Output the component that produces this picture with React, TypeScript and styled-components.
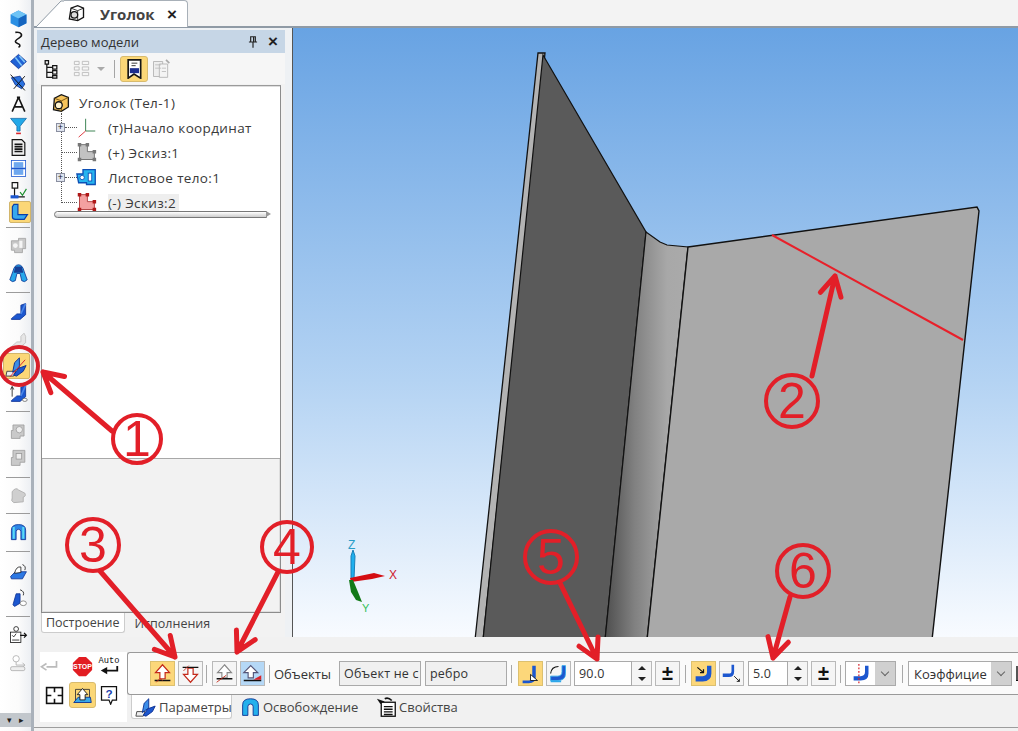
import React from "react";
import styled, { createGlobalStyle } from "styled-components";

const Global = createGlobalStyle`
  html, body { margin: 0; padding: 0; background: #f1f1f1; }
  body { font-family: "Open Sans", "Liberation Sans", sans-serif; color: #333; overflow: hidden; }
`;

const Root = styled.div`
  position: relative; width: 1018px; height: 731px; overflow: hidden;
  display: flex; background: #f1f1f1;
`;
const LeftBar = styled.div`
  width: 34px; flex: none; height: 731px; box-sizing: border-box; padding-top: 7.25px;
  display: flex; flex-direction: column; align-items: center; position: relative;
  background: linear-gradient(90deg, #fff 0%, #fbfbfb 60%, #eceff3 100%);
  border-right: 3px solid #a9b1ba;
`;
const Tool = styled.div<{ $h: number }>`
  height: ${p => p.$h}px; flex: none; width: 31px; display: flex; align-items: center; justify-content: center;
`;
const ToolFace = styled.div<{ $active?: boolean; $big?: boolean }>`
  width: ${p => (p.$big ? 27 : 22)}px; height: ${p => (p.$big ? 26 : 22)}px; flex: none; display: flex; align-items: center; justify-content: center;
  margin-left: ${p => (p.$big ? 2 : p.$active ? 8 : 5)}px; box-sizing: border-box;
  ${p => p.$active ? "background:#fbd777;border:1px solid #d2b56a;border-radius:2px;" : ""}
`;
const ToolSep = styled.div<{ $h: number }>`
  height: ${p => p.$h}px; flex: none; width: 24px; margin-left: 4px; display: flex; align-items: center;
  &::after { content: ""; display: block; width: 100%; height: 1px; background: #9b9b9b; }
`;
const BarFoot = styled.div`
  position: absolute; left: 0; right: 0; top: 713px; height: 14px; background: #c2c7cc;
  display: flex; align-items: center; justify-content: center; gap: 7px;
  font: 9px "Liberation Sans", sans-serif; color: #222;
`;
const Right = styled.div`
  flex: 1; min-width: 0; display: flex; flex-direction: column;
`;
const TabStrip = styled.div`
  height: 28px; flex: none; display: flex; background: #f3f3f3; border-bottom: 2px solid #8f9aa5; box-sizing: border-box;
`;
const DocSlant = styled.svg`
  width: 28px; height: 27px; flex: none; margin-left: 2px; display: block;
`;
const DocTab = styled.div`
  width: 124px; height: 27px; flex: none; box-sizing: border-box; background: #fff;
  border: 1px solid #a8b0b8; border-left: none; border-bottom: none; border-radius: 0 4px 0 0;
  display: flex; align-items: center; padding-left: 2px;
`;
const DocTitle = styled.span`
  font: bold 15px "Open Sans", sans-serif; color: #444; margin-left: 14px; width: 62px; flex: none; white-space: nowrap;
`;
const Work = styled.div`
  flex: 1; min-height: 0; display: flex; background: #eef1f4;
`;
const TreePanel = styled.div`
  width: 248px; flex: none; margin: 2px 0 0 3px; display: flex; flex-direction: column;
  background: #f2f2f2;
`;
const PanelHead = styled.div`
  height: 23px; flex: none; display: flex; align-items: center; padding: 0 2px 0 4px;
  background: #c6d6e6; font: 13px "Open Sans", sans-serif; color: #333;
`;
const HeadTitle = styled.span`flex: 1; white-space: nowrap;`;
const HeadBtn = styled.span`
  width: 20px; display: flex; justify-content: center; font: bold 17px/17px "Liberation Sans", sans-serif; color: #222;
`;
const PanelTools = styled.div`
  height: 31px; flex: none; display: flex; align-items: center; background: #f6f6f6;
`;
const PT = styled.div<{ $active?: boolean; $w?: number }>`
  width: ${p => p.$w ?? 28}px; height: 26px; box-sizing: border-box; flex: none; display: flex; align-items: center; justify-content: center;
  ${p => p.$active ? "background:#fbd777;border:1px solid #d8bb6e;border-radius:3px;" : ""}
`;
const PSep = styled.div`width: 1px; height: 18px; background: #a5a5a5; margin: 0 5px 0 9px; flex: none;`;
const TreeFrame = styled.div`
  flex: 1; min-height: 0; display: flex; flex-direction: column; margin: 1px 4px 0 4px;
  border: 1px solid #8c8c8c; border-top: 2px solid #9a9a9a; outline: 1px solid #dedede; outline-offset: -2px;
  position: relative; background: #fff;
`;
const TreeArea = styled.div`
  height: 372px; flex: none; background: #fff; box-sizing: border-box; padding: 4px 0 0 8px; position: relative;
  border-bottom: 1px solid #a8a8a8;
`;
const Lower = styled.div`flex: 1; background: #f2f2f2;`;
const TreeRow = styled.div<{ $indent: number; $h?: number }>`
  height: ${p => p.$h ?? 25}px; display: flex; align-items: center; padding-left: ${p => p.$indent}px;
  font: 13.5px "Open Sans", sans-serif; color: #3a3a3a; white-space: nowrap; letter-spacing: .35px; position: relative;
`;
const Expander = styled.span`
  position: absolute; left: 6px; width: 9px; height: 9px; box-sizing: border-box; background: #dfe4ef; border: 1px solid #8a8fa0;
  font: 9px/7px "Liberation Sans", sans-serif; text-align: center; color: #222;
`;
const TreeLabel = styled.span<{ $sel?: boolean; $m: number }>`
  margin-left: ${p => p.$m}px; ${p => p.$sel ? "background:#eeeeee;padding-right:3px;" : ""}
`;
const VDots = styled.div`
  position: absolute; left: 19px; top: 26px; height: 90px; border-left: 1px dotted #555;
`;
const HDots = styled.span<{ $l: number; $w: number }>`
  position: absolute; left: ${p => p.$l}px; width: ${p => p.$w}px; border-top: 1px dotted #555;
`;
const ScrollPill = styled.div`
  position: absolute; left: 12px; top: 124px; width: 213px; height: 7px; box-sizing: border-box;
  border: 1px solid #777; border-radius: 4px 0 0 4px;
  background: linear-gradient(#fff, #ccc);
  &::after { content: ""; position: absolute; right: -5px; top: -1px; border-left: 5px solid #999; border-top: 3.5px solid transparent; border-bottom: 3.5px solid transparent; }
`;
const PanelTabs = styled.div`
  height: 24px; flex: none; background: #f2f2f2; display: flex; align-items: flex-start; padding-left: 4px; box-sizing: border-box;
`;
const SmallTab = styled.div<{ $on?: boolean }>`
  height: 20px; box-sizing: border-box; padding: 0 ${p => (p.$on ? 4 : 10)}px; display: flex; align-items: center;
  font: 12.5px "Open Sans", sans-serif; color: #444; white-space: nowrap;
  ${p => p.$on ? "background:#fff;border:1px solid #ccc;border-top:none;border-radius:0 0 3px 3px;" : ""}
`;
const ViewPort = styled.div`
  margin-left: 7px; flex: 1; min-width: 0; background: linear-gradient(#68a3e3 0%, #b4d3f3 58%, #f8fbff 100%);
  border-left: 1px solid #555; overflow: hidden;
`;
const Scene = styled.svg`display: block; width: 725px; height: 609px;`;
const Bottom = styled.div`
  height: 94px; flex: none; background: #f1f1f1; position: relative; display: flex; align-items: flex-start; box-sizing: border-box;
  padding: 15px 0 0 6px;
`;
const ModeBlock = styled.div`
  width: 87px; height: 70px; flex: none; background: #fff; display: grid; grid-template-columns: 28px 28px 26px; grid-template-rows: 28px 30px;
  align-items: center; justify-items: center; box-sizing: border-box;
`;
const BackSlot = styled.div`margin-right: 10px;`;
const ModeActive = styled.div`
  width: 27px; height: 26px; background: #fbd777; border: 1px solid #d8bb6e; border-radius: 3px; box-sizing: border-box;
  display: flex; align-items: center; justify-content: center;
`;
const PropCol = styled.div`flex: 1; min-width: 0; display: flex; flex-direction: column;`;
const PropRow = styled.div`
  height: 43px; box-sizing: border-box; background: #fafafa; display: flex; align-items: center; padding-left: 22px;
  border: 1px solid #9a9a9a; border-right: none; border-radius: 3px 0 0 3px; white-space: nowrap; overflow: hidden;
`;
const Btn = styled.div<{ $kind?: "yellow" | "blue" }>`
  width: 25px; height: 25px; box-sizing: border-box; flex: none; display: flex; align-items: center; justify-content: center;
  border: 1px solid ${p => p.$kind === "yellow" ? "#dcc06f" : "#b9b9b9"};
  background: ${p => p.$kind === "yellow" ? "#fcd77a" : p.$kind === "blue" ? "#b5d8f6" : "#f5f5f5"};
  margin-right: 3px;
`;
const Sep = styled.div<{ $l: number; $r: number }>`
  width: 1px; height: 18px; flex: none; background: #a8a8a8; margin: 0 ${p => p.$r}px 0 ${p => p.$l}px;
`;
const FieldLabel = styled.span`
  font: 13px "Open Sans", sans-serif; color: #333; width: 65px; flex: none;
`;
const Field = styled.div<{ $w: number; $white?: boolean; $mr?: number; $ml?: number }>`
  width: ${p => p.$w}px; height: 25px; box-sizing: border-box; flex: none; overflow: hidden; white-space: nowrap;
  border: 1px solid #aaa; background: ${p => p.$white ? "#fff" : "#f0f0f0"}; padding-left: 4px;
  font: 12.5px/23px "Open Sans", sans-serif; color: #333; margin: 0 ${p => p.$mr ?? 0}px 0 ${p => p.$ml ?? 0}px; letter-spacing: .2px;
`;
const Spin = styled.div`
  width: 20px; height: 25px; box-sizing: border-box; flex: none; border: 1px solid #b9b9b9; border-left: none; background: #f5f5f5;
  display: grid; grid-template-rows: 1fr 1fr; justify-items: center; align-items: center; margin-right: 3px;
`;
const Tri = styled.span<{ $down?: boolean; $muted?: boolean }>`
  width: 0; height: 0; flex: none; border-left: 4px solid transparent; border-right: 4px solid transparent;
  ${p => p.$down ? `border-top: 4px solid ${p.$muted ? "#aaa" : "#222"};` : "border-bottom: 4px solid #222;"}
`;
const Chevron = styled.span`
  width: 6px; height: 6px; margin-top: -3px; box-sizing: border-box; border-right: 1.5px solid #666; border-bottom: 1.5px solid #666; transform: rotate(45deg);
`;
const PM = styled.div`
  width: 25px; height: 25px; box-sizing: border-box; flex: none; border: 1px solid #b9b9b9; background: #f5f5f5;
  font: bold 20px/22px "Liberation Sans", sans-serif; text-align: center; color: #111;
`;
const Combo = styled.div<{ $w: number }>`
  width: ${p => p.$w}px; height: 25px; box-sizing: border-box; flex: none; display: flex; align-items: center;
  border: 1px solid #aaa; background: #fff; font: 13px "Open Sans", sans-serif; color: #333;
`;
const ComboText = styled.span`flex: 1; min-width: 0; overflow: hidden; padding-left: 5px; display: flex; align-items: center;`;
const ComboArrow = styled.span`
  width: 20px; height: 100%; flex: none; background: #d0d0d0; display: flex; align-items: center; justify-content: center;
`;
const TailMark = styled.span`
  width: 2px; height: 14px; flex: none; margin-left: 4px; background: #555; border-bottom: 1px solid #111;
`;
const BottomTabs = styled.div`
  height: 27px; box-sizing: border-box; display: flex; align-items: flex-start; padding-left: 4px; background: #f1f1f1;
`;
const BTab = styled.div<{ $on?: boolean; $w: number; $pl?: number }>`
  width: ${p => p.$w}px; height: 24px; box-sizing: border-box; flex: none; display: flex; align-items: center; gap: 2px; padding-left: ${p => p.$pl ?? 3}px;
  font: 13px "Open Sans", sans-serif; color: #444; white-space: nowrap;
  ${p => p.$on ? "background:#fff;border:1px solid #ccc;border-top:none;border-radius:0 0 3px 3px;" : ""}
`;
const BottomRule = styled.div`
  position: absolute; left: 0; right: 0; bottom: 3px; height: 1px; background: #9d9d9d;
`;
const Overlay = styled.svg`
  position: absolute; left: 0; top: 0; width: 1018px; height: 731px; pointer-events: none;
`;

const B = "#1c57cf", C = "#2fa8ea", K = "#151515", R = "#d8232a";
const S = (p: { s?: number; c: React.ReactNode }) => (
  <svg width={p.s ?? 20} height={p.s ?? 20} viewBox="0 0 24 24" style={{ display: "block", flex: "none" }}>{p.c}</svg>
);
const angle = (<>
  <path d="M3 21 L10 15 L15 15 L15 4 L21 2 L21 16 L14 22 L3 22Z" fill={B} stroke="#0c2f90" strokeWidth="1" />
  <path d="M15 15 L21 2" stroke="#4a86e8" strokeWidth="2" />
</>);
const grey = (<>
  <path d="M5 5h14v14h-5v3H3V12h2z" fill="#c9c9c9" stroke="#9a9a9a" />
  <circle cx="13" cy="11" r="4" fill="#eee" stroke="#999" />
</>);
const wings = (<>
  <path d="M2 17 H11 L9 22 H1Z" fill="#eee" stroke="#444" />
  <path d="M8 18 L10 8 L15 3 L15 13Z" fill="#3c8ee8" stroke="#0c2f90" />
  <path d="M9 21 L14 14 L22 11 L19 17 L12 22Z" fill={B} stroke="#0c2f90" />
</>);
const icons: Record<string, React.ReactNode> = {
  cube: <><path d="M12 2 L22 7 L22 18 L12 23 L2 18 L2 7Z" fill="#2b8fe3" /><path d="M2 7 L12 12 L22 7 L12 2Z" fill="#6ec3f5" /><path d="M12 12 L22 7 L22 18 L12 23Z" fill="#1464bf" /></>,
  squiggle: <path d="M8 3 C16 2 18 7 13 10 C8 13 6 15 11 17 C14 18 15 20 12 22" fill="none" stroke={K} strokeWidth="2" />,
  diamond: <><path d="M12 3 L22 12 L12 21 L2 12Z" fill="#1f62d6" stroke="#0c2f90" /><path d="M8 7 L16 17 M13 5 L20 13" stroke="#7ec6f8" strokeWidth="2" /></>,
  cross: <><path d="M3 6 L14 4 L20 14 L16 20 L8 15Z" fill="#2a72df" stroke="#0c2f90" /><path d="M2 2 L20 22 M20 4 L6 20" stroke="#111" strokeWidth="1.2" /></>,
  compass: <path d="M12 3 L4 21 M12 3 L20 21 M6 15 H18 M10 3 H14" fill="none" stroke={K} strokeWidth="2" />,
  funnel: <><path d="M2 3 H22 L14 13 V19 H10 V13Z" fill="#22a8e8" stroke="#136aa8" /><path d="M9 22 H15" stroke={R} strokeWidth="2" /></>,
  doc: <><path d="M4 2 H16 L20 6 V22 H4Z" fill="#eee" stroke={K} strokeWidth="1.5" /><path d="M7 8 H17 M7 11 H17 M7 14 H17 M7 17 H17" stroke={K} strokeWidth="2" /></>,
  film: <><rect x="3" y="2" width="18" height="20" fill="#fff" stroke={B} /><rect x="6" y="4" width="12" height="7" fill="#6fa8ef" /><rect x="6" y="13" width="12" height="7" fill="#6fa8ef" /><path d="M3 12H21" stroke={B} strokeWidth="2" /></>,
  flow: <><rect x="4" y="2" width="7" height="7" fill="none" stroke={K} strokeWidth="1.5" /><path d="M7 9 V20 H20" fill="none" stroke={K} strokeWidth="1.5" /><rect x="2" y="18" width="10" height="4" fill={B} /><path d="M14 14 L17 18 L22 10" fill="none" stroke="#1c8f2f" strokeWidth="1.5" /></>,
  sheet: <path d="M3 19 Q3 22 7 22 H18 L22 16 H10 L10 3 H5 L3 6Z M10 16" fill="#37a8ee" stroke="#0c3fa8" strokeWidth="1.5" />,
  grayLink: <><path d="M3 6 H12 V3 H21 V16 H17 V21 H7 V18 H3Z" fill="#c8c8c8" stroke="#a0a0a0" /><rect x="13" y="6" width="4" height="9" fill="#f5f5f5" /><circle cx="8" cy="12" r="3" fill="#f5f5f5" /></>,
  flare: <><path d="M12 1 Q17 1 19 9 L23 20 Q20 24 16 21 L14 12 H10 L8 21 Q4 24 1 20 L5 9 Q7 1 12 1Z" fill="#27a7ea" stroke="#0c2f90" /><path d="M8 3 H16 L18 11 H6Z" fill="#163f96" /></>,
  arch: <><path d="M3 21 V9 Q3 2 12 2 Q21 2 21 9 V21 H15 V11 Q15 8 12 8 Q9 8 9 11 V21Z" fill="#2d86e6" stroke="#0c2f90" /><path d="M6 5 V20 M18 5 V20" stroke="#59dbf5" strokeWidth="2.5" /></>,
  angle,
  ghost: <path d="M3 21 L10 15 L15 15 L15 8 L19 4 L21 8 V16 L14 22 L3 22Z" fill="#e6e6e6" stroke="#bdbdbd" />,
  bend: <>{wings}<path d="M5 23 L21 5" stroke={R} strokeWidth="1" /></>,
  bend2: <>{angle}<path d="M4 16 V4 M2 7 L4 3 L6 7" fill="none" stroke="#111" /><ellipse cx="20" cy="20" rx="3" ry="2" fill="#fff" stroke="#666" /></>,
  gray1: grey,
  gray2: <><path d="M5 3h15v15h-6v4H3V12h2z" fill="#c9c9c9" stroke="#9a9a9a" /><rect x="9" y="7" width="7" height="7" fill="#eee" stroke="#999" /></>,
  hand: <path d="M4 12 L4 7 Q9 1 12 5 L20 9 Q22 13 18 14 L18 20 L6 21 Q2 19 4 15Z" fill="#cfcfcf" stroke="#a8a8a8" />,
  plate: <><path d="M2 17 L8 11 H22 L17 20 H3Z" fill="#2c78e3" stroke="#0c2f90" /><path d="M7 13 Q9 4 15 5 V12Z" fill="#fff" stroke={K} /><path d="M17 2 Q22 4 20 9" fill="none" stroke="#111" /></>,
  plate2: <><path d="M5 20 L9 6 L14 6 L14 18 L7 22Z" fill={B} stroke="#0c2f90" /><ellipse cx="18" cy="18" rx="4" ry="3" fill="#fff" stroke="#777" /><path d="M14 1 Q20 3 18 8" fill="none" stroke="#111" /></>,
  check: <><rect x="2" y="9" width="13" height="13" fill="#fff" stroke="#111" /><path d="M4 13l2 2 3-4M4 19H13" fill="none" stroke="#111" /><circle cx="9" cy="5" r="3" fill="#fff" stroke="#111" /><path d="M14 13H22M19 10l3 3-3 3" fill="none" stroke="#111" strokeWidth="1.5" /></>,
  checkG: <><circle cx="9" cy="6" r="4" fill="#fff" stroke="#aaa" /><path d="M9 10 V14 H20 M17 11l3 3-3 3" fill="none" stroke="#aaa" /><rect x="2" y="16" width="18" height="5" rx="2" fill="#eee" stroke="#aaa" /></>,
  folder: <><path d="M5 6 L13 2 L21 5 V16 L13 21 L4 19 Z" fill="#f6c35a" stroke={K} strokeWidth="1.5" /><path d="M13 21 V9 L21 5 M13 9 L5 6" fill="none" stroke="#6a4a10" /><circle cx="10" cy="14" r="4" fill="#fff4d0" stroke={K} strokeWidth="1.5" /></>,
  tabPart: <><path d="M6 5 L14 2 L21 5 V16 L14 20 L4 18 Z" fill="#fff" stroke={K} strokeWidth="1.6" /><path d="M14 20 V8 L21 5 M14 8 L6 5" fill="none" stroke={K} /><circle cx="10" cy="13" r="4" fill="#ddd" stroke={K} strokeWidth="1.5" /></>,
  axes: <><path d="M11 2 V16" stroke="#26753f" strokeWidth="1" /><path d="M11 16 H22" stroke="#26753f" strokeWidth="1" /><path d="M11 16 L3 23" stroke={R} strokeWidth="1" /></>,
  sketch: <><path d="M4 3 H13 V11 H21 V20 H4Z" fill="#c2c2c2" stroke="#666" /><path d="M2 1h4v4H2zM11 1h4v4h-4zM19 9h4v4h-4zM19 18h4v4h-4zM2 18h4v4H2z" fill="#777" /></>,
  sketchR: <><path d="M4 3 H13 V11 H21 V20 H4Z" fill="#f4a0a0" stroke="#a33" /><path d="M2 1h4v4H2zM11 1h4v4h-4zM19 9h4v4h-4zM19 18h4v4h-4zM2 18h4v4H2z" fill="#b01818" /></>,
  body: <><path d="M1 8 H8 V3 H22 V20 H12 V18 H3Z" fill="#27b4ef" stroke="#0d4fb5" strokeWidth="1.5" /><rect x="14" y="7" width="4" height="9" fill="#fff" stroke="#0d4fb5" /><circle cx="7" cy="12" r="2.5" fill="#fff" stroke="#0d4fb5" /></>,
  treeA: <><path d="M5 2h4v4H5zM14 8h5v4h-5zM14 14h5v4h-5zM14 20h5v3h-5z" fill="none" stroke={K} strokeWidth="1.5" /><path d="M7 6 V22 H14 M7 10 H14 M7 16 H14" fill="none" stroke={K} strokeWidth="1.5" /></>,
  treeB: <path d="M3 3h6v4H3zM13 3h8v4h-8zM13 10h8v4h-8zM13 17h8v4h-8zM3 10h6v4H3zM3 17h6v4H3z" fill="none" stroke="#b5b5b5" />,
  pageA: <><path d="M5 1 H20 V23 L12 18 L5 23Z" fill="#fff" stroke={K} strokeWidth="2" /><rect x="7" y="11" width="11" height="6" fill="#1c2e8f" /><path d="M9 5 H16 M9 8 H14" stroke={K} /></>,
  pageB: <><path d="M3 3 H14 V21 H3Z" fill="#eee" stroke="#b0b0b0" /><path d="M10 6 H20 V22 H10Z" fill="#f4f4f4" stroke="#b0b0b0" /><path d="M5 7H12M5 11H12M13 11H18M13 15H18" stroke="#bbb" /><path d="M18 1 L22 5" stroke="#aaa" strokeWidth="2" /></>,
  back: <path d="M21 6 V13 H9 M9 9 L3 13 L9 17" fill="none" stroke="#bbb" strokeWidth="2" />,
  stop: <><path d="M8 1 H16 L23 8 V16 L16 23 H8 L1 16 V8Z" fill="#e21d22" /><text x="12" y="15" fontSize="8" fontWeight="700" textAnchor="middle" fill="#fff" fontFamily="Liberation Sans">STOP</text></>,
  auto: <><text x="12" y="8.5" fontSize="9.5" textAnchor="middle" fill="#111" fontFamily="Liberation Mono">Auto</text><path d="M21 12 V17 H9" fill="none" stroke="#111" strokeWidth="2" /><path d="M10 13 L3 17 L10 21Z" fill="#111" /></>,
  frame: <><rect x="2" y="2" width="20" height="20" fill="#fff" stroke="#111" strokeWidth="2" /><path d="M12 2V8M12 16V22M2 12H8M16 12H22" stroke="#111" strokeWidth="2" /></>,
  prev: <><path d="M4 5 H20 V19 H4Z" fill="none" stroke="#333" /><path d="M2 20 L7 14 H21 L22 20Z" fill="#38a8ea" stroke="#0c2f90" /><path d="M12 4 L18 11 H15 V17 H9 V11 H6Z" fill="#fff" stroke="#111" /></>,
  help: <><path d="M3 2 H21 V18 H16 L14 23 L12 18 H3Z" fill="#fff" stroke="#111" strokeWidth="1.5" /><text x="12" y="15" fontSize="14" fontWeight="700" textAnchor="middle" fill="#1c3fb0" fontFamily="Liberation Sans">?</text></>,
  up: <><path d="M12 2 L20 11 H15 V18 H9 V11 H4Z" fill="#fff" stroke="#c42b1c" strokeWidth="1.4" /><path d="M3 20 H21" stroke="#111" strokeWidth="1.5" /><path d="M5 22 Q9 16 12 20" fill="none" stroke="#c42b1c" /></>,
  down: <><path d="M12 22 L20 13 H15 V6 H9 V13 H4Z" fill="#fff" stroke="#c42b1c" strokeWidth="1.4" /><path d="M3 5 H21" stroke="#111" strokeWidth="1.5" /><path d="M4 9 L10 3" stroke="#c42b1c" /></>,
  dir1: <><path d="M12 2 L20 11 H15 V17 H9 V11 H4Z" fill="#fff" stroke="#888" strokeWidth="1.3" /><path d="M3 18 H21" stroke="#111" strokeWidth="1.5" /><path d="M3 22 L14 14" stroke="#c42b1c" /></>,
  dir2: <><path d="M10 3 L18 11 H13 V17 H7 V11 H2Z" fill="#fff" stroke="#557" strokeWidth="1.3" /><path d="M2 20 H22" stroke="#111" strokeWidth="1.5" /><path d="M13 19 L22 14 V19Z" fill="#d8232a" /></>,
  b1: <><path d="M3 20 H10 Q14 20 14 15 V3 H18 V16 Q18 23 10 23 H3Z" fill={B} /><path d="M12 13 L20 20 H12Z" fill="#fff" stroke="#111" /></>,
  b2: <><path d="M3 15 H11 Q16 15 16 10 V3 H20 V12 Q20 20 11 20 H3Z" fill={B} stroke={C} /><path d="M3 12 Q4 4 12 4" fill="none" stroke="#111" strokeWidth="1.3" /><path d="M3 21H15" stroke={C} strokeWidth="2" /></>,
  b3: <><path d="M3 15 H11 Q16 15 16 10 V3 H21 V12 Q21 21 11 21 H3Z" fill={B} /><path d="M5 5 L12 11 M12 7 V11 H8" fill="none" stroke="#111" strokeWidth="1.4" /></>,
  b4: <><path d="M2 12 H9 Q12 12 12 9 V2 H15 V10 Q15 16 9 16 H2Z" fill={B} /><path d="M15 15 L21 21 M18 21H21V18" fill="none" stroke="#111" /></>,
  b5: <><path d="M3 15 H11 Q16 15 16 10 V3 H20 V12 Q20 20 11 20 H3Z" fill={B} /><path d="M9 1 V23" stroke={R} strokeDasharray="2 2" strokeWidth="1.4" /></>,
  arch2: <path d="M3 21 V9 Q3 2 12 2 Q21 2 21 9 V21 H15 V11 Q15 8 12 8 Q9 8 9 11 V21Z" fill="#24b0ec" stroke="#0c2f90" />,
  wings,
  props: <><path d="M1 2 L10 5 L5 8Z" fill="#111" /><rect x="6" y="6" width="16" height="16" fill="#fff" stroke="#111" strokeWidth="1.5" /><path d="M9 11H19M9 14H19M9 17H19M9 20H19" stroke="#111" strokeWidth="1.5" /><path d="M10 2 Q14 0 18 4" fill="none" stroke="#111" strokeWidth="2" /></>,
  pin: <path d="M8 3 H16 V12 H8Z M5 12 H19 M12 12 V22 M13 3 V12" fill="none" stroke="#222" strokeWidth="2" />,
};
const Ico = ({ n, s }: { n: string; s?: number }) => <S s={s} c={icons[n]} />;

type Item = { n?: string; h: number; active?: boolean; big?: boolean; s?: number };
const tools: Item[] = [
  { n: "cube", h: 21.5 }, { n: "squiggle", h: 21.5 }, { n: "diamond", h: 21.5 }, { n: "cross", h: 21.5 },
  { n: "compass", h: 21.5 }, { n: "funnel", h: 21.5 }, { n: "doc", h: 21.5 }, { n: "film", h: 21.5 },
  { n: "flow", h: 21.5 }, { n: "sheet", h: 21.5, active: true }, { h: 10 },
  { n: "grayLink", h: 26 }, { n: "flare", h: 30 }, { h: 8 }, { n: "angle", h: 31 }, { n: "ghost", h: 24 },
  { n: "bend", h: 30, active: true, big: true, s: 23 }, { n: "bend2", h: 24 }, { h: 13 }, { n: "gray1", h: 25 },
  { n: "gray2", h: 29 }, { h: 10 }, { n: "hand", h: 26 }, { h: 10 }, { n: "arch", h: 29 }, { h: 8 },
  { n: "plate", h: 34 }, { n: "plate2", h: 18 }, { h: 18 }, { n: "check", h: 19 }, { n: "checkG", h: 38 }, { h: 0 },
];

const Arrow = ({ x1, y1, x2, y2 }: { x1: number; y1: number; x2: number; y2: number }) => {
  const a = Math.atan2(y2 - y1, x2 - x1), L = 22, sp = 0.5;
  const px = (d: number) => x2 - L * Math.cos(a + d), py = (d: number) => y2 - L * Math.sin(a + d);
  return <path d={`M${x1} ${y1}L${x2} ${y2}M${px(sp)} ${py(sp)}L${x2} ${y2}L${px(-sp)} ${py(-sp)}`} fill="none" stroke="#e21f28" strokeWidth="5" strokeLinecap="round" strokeLinejoin="round" />;
};
const Badge = ({ x, y, t, r = 26 }: { x: number; y: number; t: string; r?: number }) => (
  <>
    <circle cx={x} cy={y} r={r} fill="none" stroke="#e21f28" strokeWidth="4" />
    <text x={x} y={y + 17} fontSize="50" textAnchor="middle" fill="#e21f28" fontFamily="Liberation Sans, sans-serif">{t}</text>
  </>
);

export default function App() {
  return (
    <Root>
      <Global />
      <LeftBar>
        {tools.map((t, i) => t.n ? (
          <Tool key={i} $h={t.h}><ToolFace $active={t.active} $big={t.big}><Ico n={t.n} s={t.s ?? 19} /></ToolFace></Tool>
        ) : t.h ? <ToolSep key={i} $h={t.h} /> : null)}
        <BarFoot><span>▾</span><span>▸</span></BarFoot>
      </LeftBar>
      <Right>
        <TabStrip>
          <DocSlant viewBox="0 0 28 27"><path d="M0 27 L25 1 H28 V27Z" fill="#fff" /><path d="M0 27 L25 1 H28" fill="none" stroke="#8f9aa5" /></DocSlant>
          <DocTab>
            <Ico n="tabPart" s={20} />
            <DocTitle>Уголок</DocTitle>
            <HeadBtn>×</HeadBtn>
          </DocTab>
        </TabStrip>
        <Work>
          <TreePanel>
            <PanelHead>
              <HeadTitle>Дерево модели</HeadTitle>
              <HeadBtn><Ico n="pin" s={14} /></HeadBtn>
              <HeadBtn>×</HeadBtn>
            </PanelHead>
            <PanelTools>
              <PT><Ico n="treeA" s={20} /></PT>
              <PT $w={32}><Ico n="treeB" s={19} /></PT>
              <Tri $down $muted />
              <PSep />
              <PT $active><Ico n="pageA" s={20} /></PT>
              <PT $w={26}><Ico n="pageB" s={20} /></PT>
            </PanelTools>
            <TreeFrame>
              <TreeArea>
                <VDots />
                <TreeRow $indent={0} $h={24}><Ico n="folder" s={21} /><TreeLabel $m={8}>Уголок (Тел-1)</TreeLabel></TreeRow>
                <TreeRow $indent={26}><Expander>+</Expander><HDots $l={15} $w={12} /><Ico n="axes" s={21} /><TreeLabel $m={11}>(т)Начало координат</TreeLabel></TreeRow>
                <TreeRow $indent={26}><HDots $l={11} $w={16} /><Ico n="sketch" s={21} /><TreeLabel $m={11}>(+) Эскиз:1</TreeLabel></TreeRow>
                <TreeRow $indent={26}><Expander>+</Expander><HDots $l={15} $w={12} /><Ico n="body" s={21} /><TreeLabel $m={11}>Листовое тело:1</TreeLabel></TreeRow>
                <TreeRow $indent={26}><HDots $l={11} $w={16} /><Ico n="sketchR" s={21} /><TreeLabel $m={11} $sel>(-) Эскиз:2</TreeLabel></TreeRow>
                <ScrollPill />
              </TreeArea>
              <Lower />
            </TreeFrame>
            <PanelTabs>
              <SmallTab $on>Построение</SmallTab>
              <SmallTab>Исполнения</SmallTab>
            </PanelTabs>
          </TreePanel>
          <ViewPort>
            <Scene viewBox="293 28 725 609">
              <defs>
                <linearGradient id="fold" x1="0" x2="1" y1="0" y2="0">
                  <stop offset="0" stopColor="#4e4e4e" />
                  <stop offset=".35" stopColor="#808080" />
                  <stop offset=".75" stopColor="#a8a8a8" />
                  <stop offset="1" stopColor="#aaa" />
                </linearGradient>
              </defs>
              <path d="M538 53 L545 53 L483 640 L475 640Z" fill="#b3b3b3" stroke="#111" strokeWidth="1.3" />
              <path d="M543 55 L646 232 L605 640 L483 640Z" fill="#5a5a5a" stroke="#111" strokeWidth="1.2" />
              <path d="M646 232 L660 242 L667 245 L688 247 L647 640 L605 640Z" fill="url(#fold)" stroke="#111" strokeWidth="1.2" />
              <path d="M688 247 L977 207 L979 211 L932 640 L647 640Z" fill="#a9a9a9" stroke="#111" strokeWidth="1.4" />
              <path d="M772 235 L963 340" stroke="#e8202a" strokeWidth="2" />
              <path d="M351 579 L351 556 L353 550 L355 556 L354 579Z" fill="#1fb0ee" stroke="#197fb8" strokeWidth="1" />
              <path d="M350 578 L374 573 L385 576 L372 579 L351 582Z" fill="#d40d12" />
              <path d="M349 580 L353 580 L358 592 L362 602 L356 600 L351 592Z" fill="#137a18" />
              <text x="348" y="549" fontSize="12" fill="#2a9dc8" fontFamily="Liberation Sans, sans-serif">Z</text>
              <text x="389" y="579" fontSize="12" fill="#cf2030" fontFamily="Liberation Sans, sans-serif">X</text>
              <text x="362" y="612" fontSize="11" fill="#36c05a" fontFamily="Liberation Sans, sans-serif">Y</text>
            </Scene>
          </ViewPort>
        </Work>
        <Bottom>
          <ModeBlock>
            <BackSlot><Ico n="back" s={20} /></BackSlot>
            <Ico n="stop" s={21} />
            <Ico n="auto" s={22} />
            <Ico n="frame" s={19} />
            <ModeActive><Ico n="prev" s={21} /></ModeActive>
            <Ico n="help" s={20} />
          </ModeBlock>
          <PropCol>
            <PropRow>
              <Btn $kind="yellow"><Ico n="up" s={21} /></Btn>
              <Btn><Ico n="down" s={21} /></Btn>
              <Sep $l={0} $r={5} />
              <Btn><Ico n="dir1" s={21} /></Btn>
              <Btn $kind="blue"><Ico n="dir2" s={21} /></Btn>
              <Sep $l={1} $r={4} />
              <FieldLabel>Объекты</FieldLabel>
              <Field $w={82} $mr={4}>Объект не с</Field>
              <Field $w={82}>ребро</Field>
              <Sep $l={4} $r={6} />
              <Btn $kind="yellow"><Ico n="b1" s={21} /></Btn>
              <Btn><Ico n="b2" s={21} /></Btn>
              <Field $w={58} $white>90.0</Field>
              <Spin><Tri /><Tri $down /></Spin>
              <PM>±</PM>
              <Sep $l={5} $r={5} />
              <Btn $kind="yellow"><Ico n="b3" s={21} /></Btn>
              <Btn><Ico n="b4" s={21} /></Btn>
              <Field $w={40} $white $ml={1}>5.0</Field>
              <Spin><Tri /><Tri $down /></Spin>
              <PM>±</PM>
              <Sep $l={4} $r={4} />
              <Combo $w={51}><ComboText><Ico n="b5" s={21} /></ComboText><ComboArrow><Chevron /></ComboArrow></Combo>
              <Sep $l={6} $r={5} />
              <Combo $w={104}><ComboText>Коэффицие</ComboText><ComboArrow><Chevron /></ComboArrow></Combo>
              <TailMark />
            </PropRow>
            <BottomTabs>
              <BTab $on $w={101}><Ico n="wings" s={22} />Параметры</BTab>
              <BTab $w={141} $pl={8}><Ico n="arch2" s={21} />Освобождение</BTab>
              <BTab $w={90}><Ico n="props" s={21} />Свойства</BTab>
            </BottomTabs>
          </PropCol>
          <BottomRule />
        </Bottom>
      </Right>
      <Overlay viewBox="0 0 1018 731">
        <circle cx="19" cy="366" r="19" fill="none" stroke="#d81f2a" strokeWidth="4" />
        <Arrow x1={112} y1={431} x2={43} y2={372} />
        <Badge x={137} y={439} t="1" r={24} />
        <Arrow x1={812} y1={376} x2={835} y2={276} />
        <Badge x={792} y={401} t="2" />
        <Arrow x1={100} y1={571} x2={175} y2={657} />
        <Badge x={93} y={545} t="3" />
        <Arrow x1={278} y1={572} x2={237} y2={652} />
        <Badge x={287} y={547} t="4" r={25} />
        <Arrow x1={560} y1={583} x2={597} y2={659} />
        <Badge x={551} y={557} t="5" />
        <Arrow x1={790} y1={597} x2={773} y2={658} />
        <Badge x={803} y={571} t="6" />
      </Overlay>
    </Root>
  );
}
